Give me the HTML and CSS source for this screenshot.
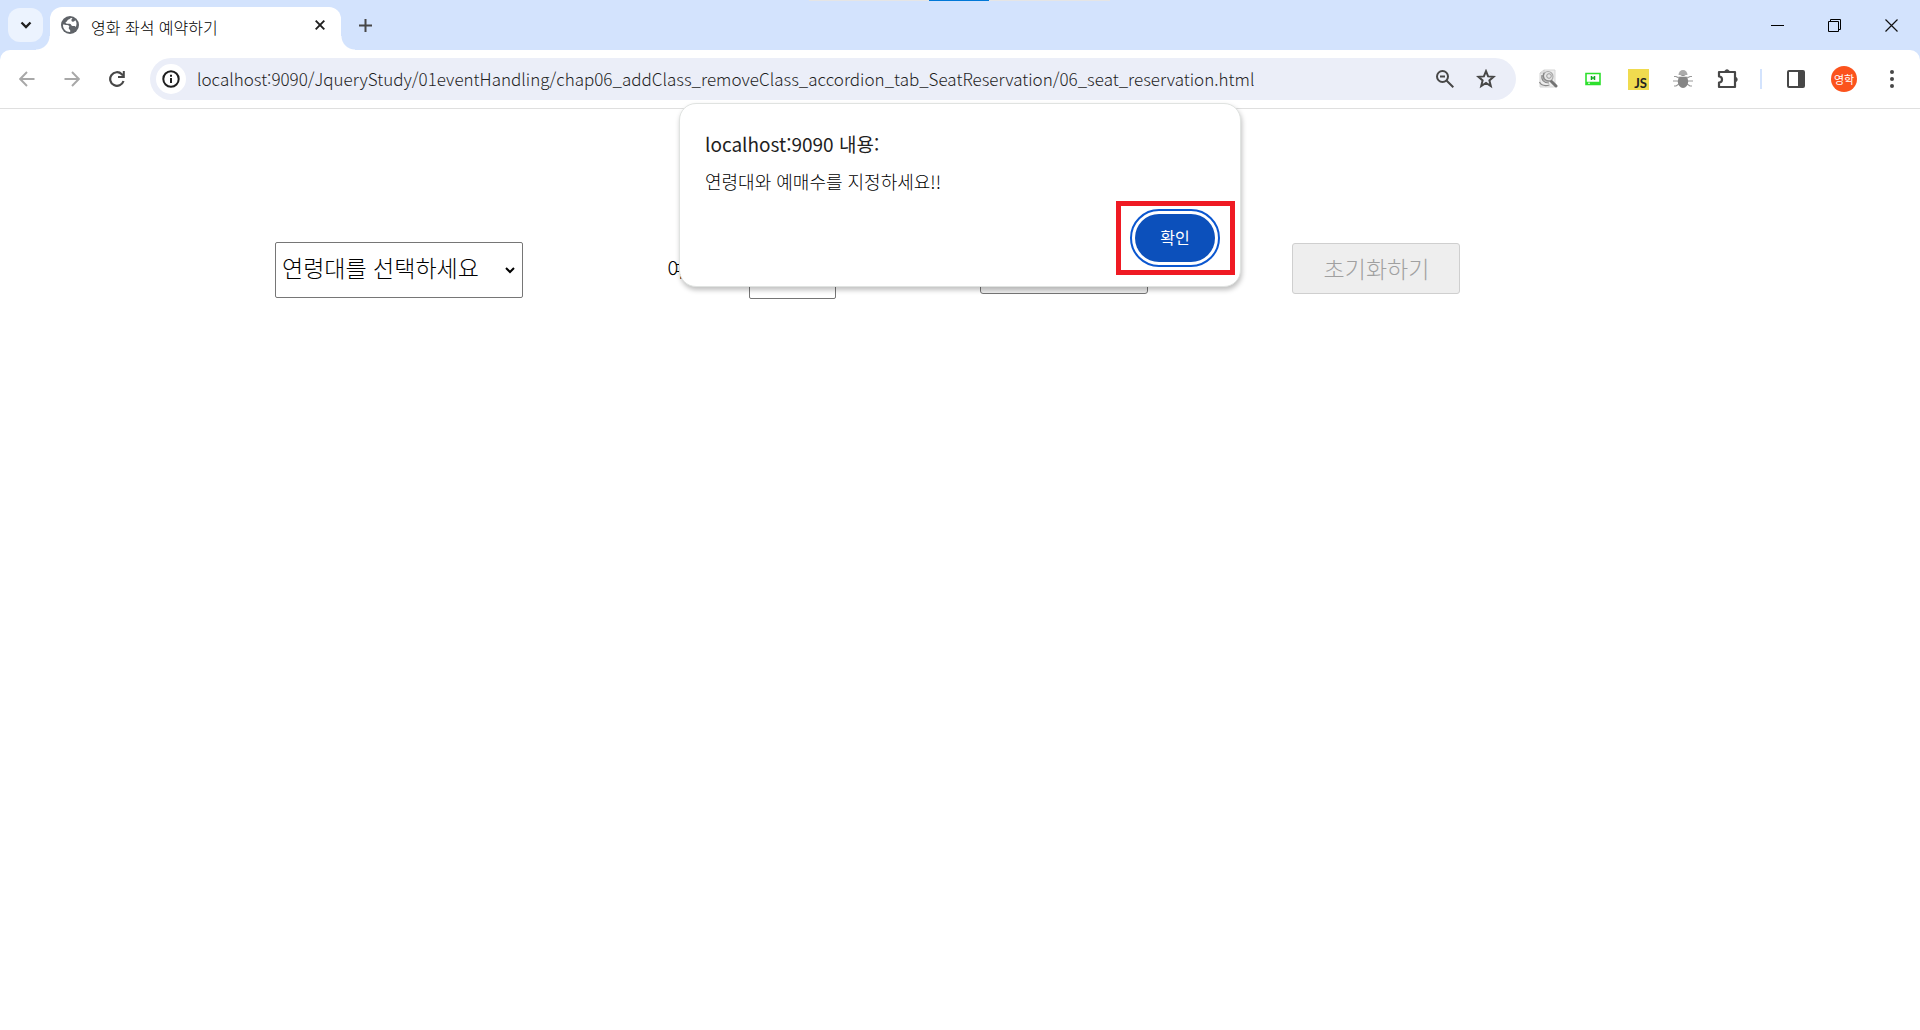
FILE: index.html
```html
<!DOCTYPE html>
<html lang="ko">
<head>
<meta charset="utf-8">
<title>영화 좌석 예약하기</title>
<link rel="stylesheet" href="styles.css">
</head>
<body>
<header class="browser">
  <div class="share-bar"></div>
  <div class="tab-strip">
    <button class="tab-search" aria-label="탭 검색">
      <svg width="12" height="8" viewBox="0 0 12 8"><path d="M1.500 1.500 6 6l4.500-4.500" fill="none" stroke="#1f1f1f" stroke-width="2.300"/></svg>
    </button>
    <div class="tab">
      <svg class="favicon" width="18" height="18" viewBox="0 0 18 18"><circle cx="9" cy="9" r="9" fill="#5f6368"/><path d="M10.500 2c-1.800.2-1.500 1.300-3 1.500C6 3.800 6.500 5.500 5 6c-1 .4-.3 1.800 1.300 1.800h2.400c1.500 0 1.200 2.200 2.700 2.200H13c.9 0 1.600.4 1.600 1.300 1.300-2.500 1.300-5-.3-7-.8.8-1.300 1.600-2.600 1.400C10 5.500 10 3.500 11.500 2.300zM2 8.500C1.700 13 5 16.300 9.200 16v-1.700c0-.8-1.400-.7-1.400-1.700v-.8c0-.7.800-1 .3-1.800C7.400 9 6.800 9 5.800 9 4.400 9 3.500 8.500 2 8.500z" fill="#fff"/></svg>
      <span class="tab-title">영화 좌석 예약하기</span>
      <button class="icon-btn tab-close" aria-label="탭 닫기">
        <svg width="10" height="10" viewBox="0 0 10 10"><path d="m.7.7 8.600 8.600M9.300.7.7 9.300" stroke="#1f1f1f" stroke-width="1.900"/></svg>
      </button>
    </div>
    <button class="icon-btn new-tab" aria-label="새 탭">
      <svg width="13" height="13" viewBox="0 0 13 13"><path d="M6.500 0v13M0 6.500h13" stroke="#474747" stroke-width="2"/></svg>
    </button>
    <div class="window-controls">
      <button class="window-btn" aria-label="최소화"><svg width="13" height="13" viewBox="0 0 13 13"><path d="M0 6.500h13" stroke="#000"/></svg></button>
      <button class="window-btn" aria-label="이전 크기로"><svg width="13" height="13" viewBox="0 0 13 13"><path d="M.5 2.500h10v10H.5zM2.500 2V.5h10v10H11" fill="none" stroke="#000"/></svg></button>
      <button class="window-btn" aria-label="닫기"><svg width="13" height="13" viewBox="0 0 13 13"><path d="m.5.5 12 12M12.500.5l-12 12" stroke="#111" stroke-width="1.200"/></svg></button>
    </div>
  </div>
  <div class="toolbar">
    <nav class="nav-buttons">
      <button class="icon-btn" aria-label="뒤로"><svg width="16" height="16" viewBox="0 0 16 16"><path d="M15.500 8h-14M8 1 1.200 8 8 15" fill="none" stroke="#a8a8a8" stroke-width="1.900"/></svg></button>
      <button class="icon-btn" aria-label="앞으로"><svg width="16" height="16" viewBox="0 0 16 16"><path d="M.5 8h14M8 1l6.800 7L8 15" fill="none" stroke="#a8a8a8" stroke-width="1.900"/></svg></button>
      <button class="icon-btn" aria-label="새로고침"><svg width="16" height="16" viewBox="0 0 16 16"><path d="M14.500 10A6.800 6.800 0 1 1 12.800 3.200L14 4.400" fill="none" stroke="#474747" stroke-width="2.200"/><path d="M15.800 0v7H9V5h4.800V0z" fill="#474747"/></svg></button>
    </nav>
    <form class="omnibox">
      <button type="button" class="site-info" aria-label="사이트 정보 보기"><svg width="18" height="18" viewBox="0 0 18 18"><circle cx="9" cy="9" r="7.700" fill="none" stroke="#1f1f1f" stroke-width="2"/><path d="M9 8v5M9 4.800v2" stroke="#1f1f1f" stroke-width="2"/></svg></button>
      <input class="url" type="text" aria-label="주소창" value="localhost:9090/JqueryStudy/01eventHandling/chap06_addClass_removeClass_accordion_tab_SeatReservation/06_seat_reservation.html">
      <button type="button" class="icon-btn" aria-label="확대/축소"><svg width="18" height="18" viewBox="0 0 18 18"><circle cx="6.500" cy="6.500" r="5.500" fill="none" stroke="#474747" stroke-width="2"/><path d="m10.500 10.500 6.800 6.800M4 6.500h5" stroke="#474747" stroke-width="2"/></svg></button>
      <button type="button" class="icon-btn" aria-label="북마크"><svg width="20" height="20" viewBox="0 0 20 20"><path d="m10 2.200 2.100 5.200 5.500.4-4.200 3.600 1.400 5.600L10 14l-4.800 3 1.400-5.600-4.200-3.600 5.500-.4z" fill="none" stroke="#474747" stroke-width="2"/></svg></button>
    </form>
    <div class="extensions">
      <button class="icon-btn" aria-label="이미지 검색"><svg width="20" height="20" viewBox="0 0 20 20"><path d="M2 4 6 1h11v17H2z" fill="#ececec" stroke="#d5d5d5"/><path d="M2 4h4V1" fill="none" stroke="#ccc"/><circle cx="10" cy="7.500" r="5" fill="#e6e6e6" stroke="#aaa" stroke-width="1.200"/><circle cx="11" cy="7" r="2.300" fill="none" stroke="#999"/><path d="M4 6c-1 5 2 8 7 8M1.500 13c2 4 6 4 10 3M6 4c-2 5 1 8 6 8" fill="none" stroke="#888" stroke-width="1.200"/><path d="m13.500 12.500 4.500 4.500" stroke="#737373" stroke-width="3" stroke-linecap="round"/></svg></button>
      <button class="icon-btn" aria-label="화면 캡처"><svg width="16" height="14" viewBox="0 0 16 14"><path d="M1 1.500h14v11H1z" fill="#fff" stroke="#2de02d" stroke-width="1.600"/><path d="M1 11h14" stroke="#2de02d" stroke-width="2.500"/><path d="M6.500 4v4M9.500 4v4M6 6h4" stroke="#12a822" stroke-width="1.500"/><path d="M3 11.200h2" stroke="#fff"/></svg></button>
      <button class="js-ext" aria-label="자바스크립트">JS</button>
      <button class="icon-btn" aria-label="디버그"><svg width="20" height="20" viewBox="0 0 20 20"><path d="M6 9 3 7.500H1M5 12H0M6 15l-3 2H1M14 9l3-1.500h2M15 12h5M14 15l3 2h2" fill="none" stroke="#999" stroke-width="1.200"/><path d="M5.500 6a4.500 5 0 0 1 9 0z" fill="#aaa"/><ellipse cx="10" cy="12.500" rx="5.200" ry="6.500" fill="#858585"/><path d="M5.500 7.500h9" stroke="#ddd"/></svg></button>
      <button class="icon-btn" aria-label="확장 프로그램"><svg width="22" height="22" viewBox="0 0 22 22"><path d="M2 4h16v15H2v-4.500a3 3 0 0 0 0-6z" fill="none" stroke="#474747" stroke-width="2.200" stroke-linejoin="round"/><path d="M7.500 3.500a2.700 2.700 0 0 1 5 0zM18.500 9a2.700 2.700 0 0 1 0 5z" fill="#474747" stroke="#474747"/></svg></button>
    </div>
    <span class="divider"></span>
    <div class="profile">
      <button class="icon-btn" aria-label="측면 패널"><svg width="18" height="18" viewBox="0 0 18 18"><rect x="1" y="1" width="16" height="16" rx="1" fill="none" stroke="#474747" stroke-width="2"/><path d="M11 1h6v16h-6z" fill="#474747"/></svg></button>
      <button class="avatar" aria-label="프로필">영학</button>
      <button class="icon-btn" aria-label="메뉴"><svg width="4" height="18" viewBox="0 0 4 18"><g fill="#474747"><circle cx="2" cy="2" r="2"/><circle cx="2" cy="9" r="2"/><circle cx="2" cy="16" r="2"/></g></svg></button>
    </div>
  </div>
</header>
<main class="page">
  <form class="reservation">
    <select class="age" aria-label="연령대"><option>연령대를 선택하세요</option></select>
    <div class="count"><label for="count">예매수</label> <input id="count" type="text"></div>
    <button type="button" class="action">예매하기</button>
    <button type="button" class="action" disabled>초기화하기</button>
  </form>
</main>
<section class="alert" role="alertdialog" aria-labelledby="alert-title" aria-describedby="alert-text">
  <h1 class="alert-title" id="alert-title">localhost:9090 내용:</h1>
  <p class="alert-text" id="alert-text">연령대와 예매수를 지정하세요!!</p>
  <div class="highlight"><button class="confirm">확인</button></div>
</section>
</body>
</html>
```
FILE: styles.css
```css
* { box-sizing: border-box; }
body {
  margin: 0;
  min-height: 100vh;
  position: relative;
  background: #fff;
  color: #000;
  font-family: "Noto Sans CJK KR", sans-serif;
  font-weight: 300;
}
button, input, select { font: inherit; color: inherit; }
button { padding: 0; border: 0; background: none; }
svg { display: block; }

.browser { background: #d3e3fd; }
.share-bar {
  position: absolute;
  top: 0;
  left: 50%;
  width: 301px;
  height: 1px;
  transform: translateX(-151px);
  background: linear-gradient(#0078d7, #0078d7) 120px 0 / 60px 1px no-repeat #e5e5e5;
}
.tab-strip { display: flex; align-items: center; height: 50px; padding-left: 8px; }
.tab-search {
  display: grid;
  place-items: center;
  width: 35px;
  height: 34px;
  border-radius: 12px;
  background: #ecf3fe;
}
.tab {
  position: relative;
  display: flex;
  align-items: center;
  align-self: flex-end;
  width: 291px;
  height: 43px;
  margin-left: 7px;
  padding: 0 6px 7px 11px;
  border-radius: 12px 12px 0 0;
  background: #fff;
}
.tab::before, .tab::after {
  content: "";
  position: absolute;
  bottom: 0;
  width: 14px;
  height: 14px;
}
.tab::before { right: 100%; background: radial-gradient(circle at 0 0, transparent 13px, #fff 14px); }
.tab::after { left: 100%; background: radial-gradient(circle at 100% 0, transparent 13px, #fff 14px); }
.tab-title { flex: 1; padding: 3px 0 0 12px; font-size: 16px; line-height: 24px; }
.icon-btn { display: grid; place-items: center; width: 30px; height: 30px; }
.new-tab { margin-left: 9px; }
.window-controls { display: flex; margin-left: auto; }
.window-btn { display: grid; place-items: center; width: 57px; height: 48px; }

.toolbar {
  display: flex;
  align-items: center;
  height: 59px;
  padding-right: 13px;
  border-bottom: 1px solid #dfdfdf;
  border-radius: 10px 10px 0 0;
  background: #fff;
}
.nav-buttons { display: flex; gap: 15px; padding: 0 18px 0 12px; }
.omnibox {
  display: flex;
  align-items: center;
  flex: 1;
  gap: 11px;
  height: 42px;
  padding: 0 15px 0 6px;
  border-radius: 21px;
  background: #ebeef8;
}
.site-info {
  display: grid;
  place-items: center;
  width: 30px;
  height: 30px;
  border-radius: 50%;
  background: #fff;
}
.url {
  flex: 1;
  min-width: 0;
  padding: 0;
  border: 0;
  background: none;
  color: #1f1f1f;
  font-size: 17px;
  line-height: 24px;
}
.extensions { display: flex; align-items: center; gap: 15px; padding: 0 17px; }
.js-ext {
  width: 30px;
  height: 21px;
  padding: 5px 6px 0 0;
  background: linear-gradient(#f0db4f, #f0db4f) center / 21px 21px no-repeat;
  color: #222;
  font: bold 13px/18px Lato, sans-serif;
  text-align: right;
}
.divider { width: 2px; height: 20px; background: #d3e3fd; }
.profile { display: flex; align-items: center; gap: 18px; padding-left: 19px; }
.avatar {
  width: 26px;
  height: 26px;
  margin: 0 2px;
  border-radius: 50%;
  background: #fb531d;
  color: #fff;
  font-size: 11px;
  font-weight: 400;
  line-height: 26px;
}

.page { padding: 133px 275px 0; }
.reservation {
  display: flex;
  align-items: flex-start;
  gap: 144px;
  color: #000;
  font-size: 23px;
  line-height: 34px;
  white-space: nowrap;
}
.age {
  width: 248px;
  height: 56px;
  padding: 0 0 6px 6px;
  border: 1px solid #767676;
  border-radius: 2px;
  appearance: none;
  background: #fff url("data:image/svg+xml,%3Csvg xmlns='http://www.w3.org/2000/svg' width='12' height='8'%3E%3Cpath d='M2 2l4 4 4-4' fill='none' stroke='%23000' stroke-width='2'/%3E%3C/svg%3E") right 6px center no-repeat;
  color: #000;
}
.count { display: flex; align-items: center; gap: 19px; }
.count label { padding-bottom: 6px; }
.count input {
  width: 87px;
  height: 57px;
  border: 1px solid #767676;
  border-radius: 2px;
}
.action {
  width: 168px;
  height: 51px;
  margin-top: 1px;
  padding-bottom: 2px;
  border: 1px solid #767676;
  border-radius: 3px;
  background: #efefef;
}
.action:disabled { border-color: #cfcfcf; background: #eee; color: #a0a0a0; }

.alert {
  position: absolute;
  top: 103px;
  left: 50%;
  display: flex;
  flex-direction: column;
  width: 562px;
  padding: 25px 5px 11px 25px;
  border: 1px solid #e0e3e1;
  border-radius: 17px;
  background: #fff;
  box-shadow: 1px 3px 5px rgba(0, 0, 0, .25);
  transform: translateX(-50%);
}
.alert-title { margin: 0; color: #1f1f1f; font-size: 19px; font-weight: 400; line-height: 30px; }
.alert-text { margin: 10px 0 8px; font-size: 18px; line-height: 24px; }
.highlight {
  align-self: flex-end;
  padding: 8px 15px 8px 14px;
  border: 5px solid #ef1a23;
}
.confirm {
  display: block;
  width: 80px;
  height: 48px;
  padding-bottom: 2px;
  border-radius: 24px;
  outline: 2px solid #0b57d0;
  outline-offset: 3px;
  background: #0c50bb;
  color: #fff;
  font-size: 16px;
  font-weight: 400;
}
```
